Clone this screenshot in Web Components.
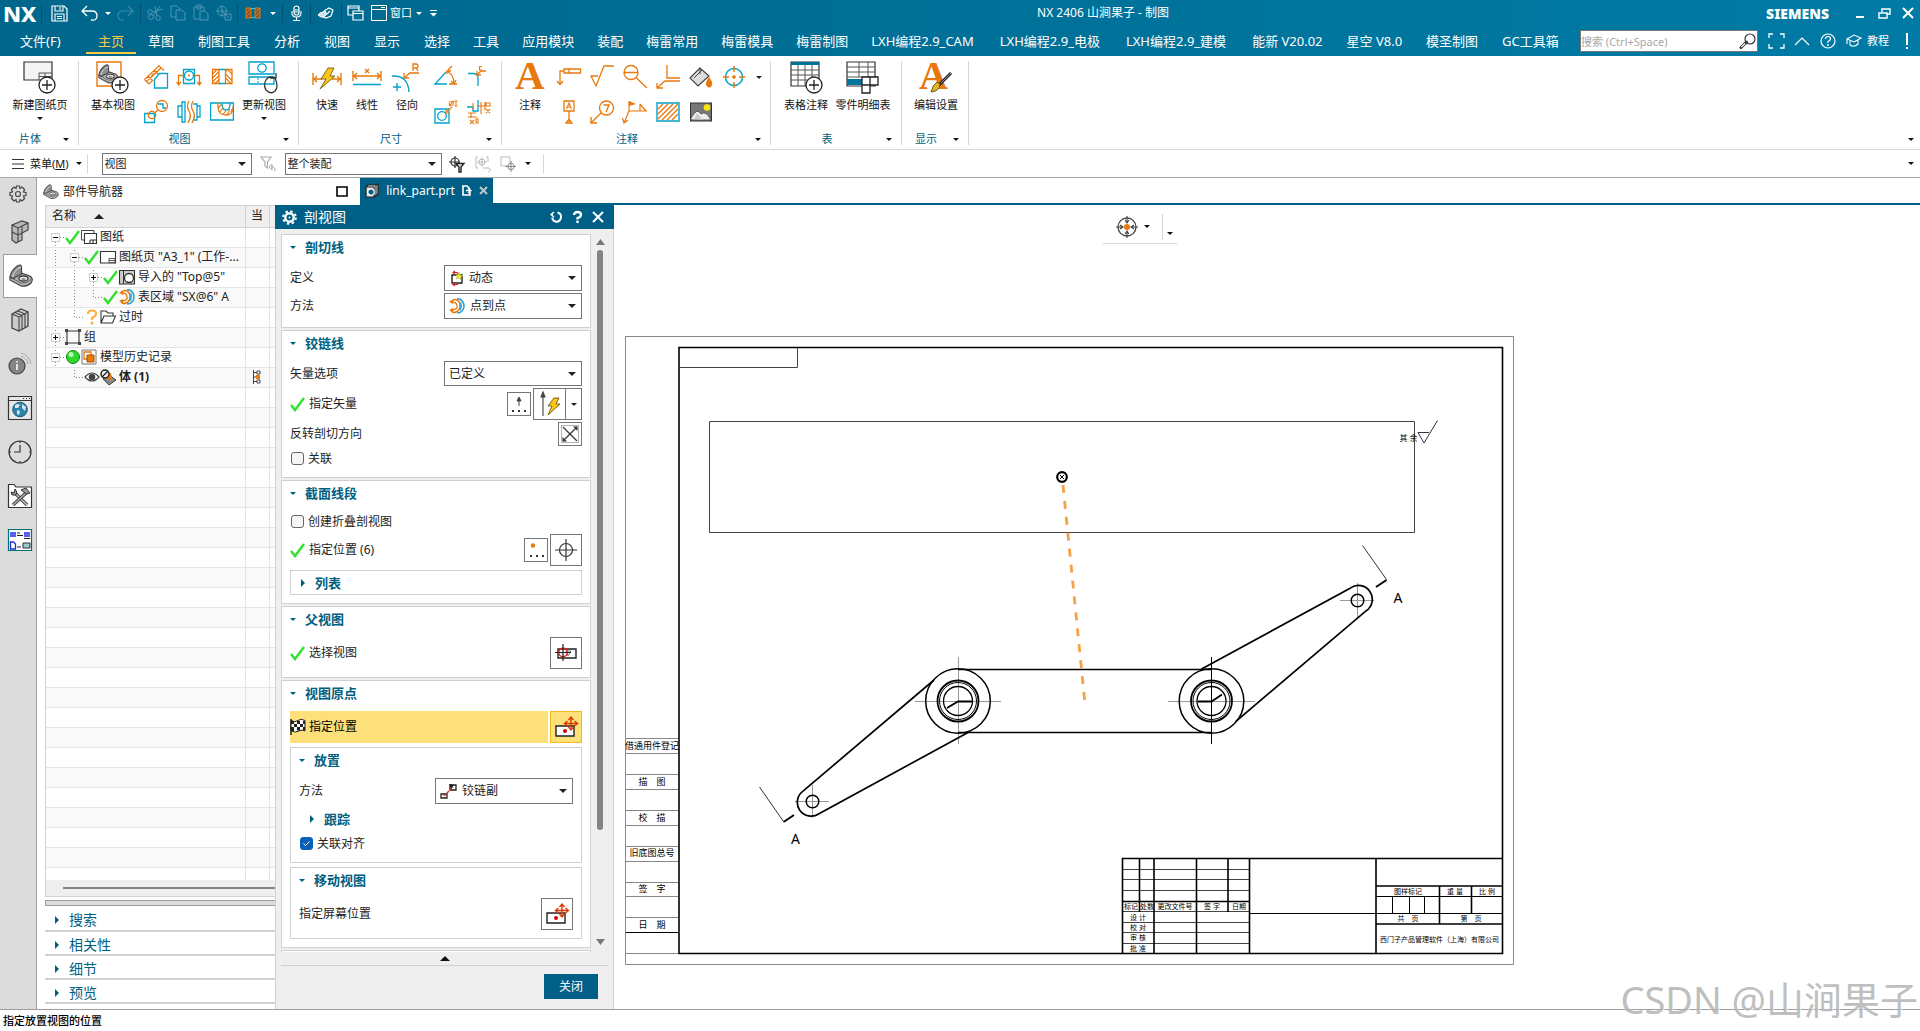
<!DOCTYPE html>
<html lang="zh-CN">
<head>
<meta charset="utf-8">
<title>NX 2406 山涧果子 - 制图</title>
<style>
html,body{margin:0;height:100%}
body{font:12px/16px "Noto Sans","Noto Sans CJK SC",sans-serif;color:#222;background:#fff;overflow:hidden}
</style>
</head>
<body>
<nx-app></nx-app>
<script>
const O='#e9780c', C='#00a3c9', K='#3c3c3c';
const s=(c,w=1.4)=>`fill="none" stroke="${c}" stroke-width="${w}"`;
const check='<path d="M1 9L5 14L14 2" fill="none" stroke="#2fe02f" stroke-width="2.4"/>';
const part=`<path d="M1 13L12 9L21 12Q25 15 22 19Q18 23 12 22L1 16Z" fill="#b2b2b2" stroke="#444" stroke-width="1.200"/><path d="M1 13L12 19Q18 20 23 15" fill="none" stroke="#666"/><path d="M1 13Q2 6 9 1.500Q12 0 12.500 3V10L4 14.500Z" fill="#8f8f8f" stroke="#444" stroke-width="1.200"/><path d="M3.500 13Q5 6 12 3" fill="none" stroke="#ddd"/><ellipse cx="14.500" cy="14.500" rx="4.500" ry="2.500" fill="#f2f2f2" stroke="#444" stroke-width="1.300"/><ellipse cx="14.500" cy="15" rx="2.200" ry="1.100" fill="#888"/>`;
const plusBadge=(x,y,r=8)=>`<circle cx="${x}" cy="${y}" r="${r}" fill="#fff" stroke="#222" stroke-width="1.3"/><path d="M${x-5} ${y}H${x+5}M${x} ${y-5}V${y+5}" stroke="#222" stroke-width="1.3"/>`;
const moveBox='<path d="M1 11H19V21H1Z" fill="#fff" stroke="#222" stroke-width="1.4"/><circle cx="10" cy="16" r="2" fill="#d00000"/><path d="M16 2.500V14.500M10 8.500H22" stroke="#d93a00" stroke-width="1.4"/><path d="M13.500 5L16 2L18.500 5M13.500 12L16 15L18.500 12M12.500 6L9.500 8.500L12.500 11M19.500 6L22.500 8.500L19.500 11" fill="none" stroke="#d93a00" stroke-width="1.4"/>';
const spring=`<path d="M3 3Q5 .5 8 2T11 8T7 14T2 12" ${s(O,1.500)}/><path d="M3 5Q7 3 8 7.500T3 11.500" ${s(O,1.300)}/><path d="M0 3.500L4.500 1.500L4 6ZM0 12L4 10L4.500 14Z" fill="${O}"/><path d="M8 .8L11 1Q15 4 15 8T11 14.500L8 15M11.500 4.500Q13 8 11 12" ${s('#2ba5d8',1.600)}/>`;
const ICONS={
caret:[8,4,'<path d="M0 0H8L4 4Z" fill="currentColor"/>'],
caretS:[6,3,'<path d="M0 0H6L3 3Z" fill="currentColor"/>'],
caretBar:[7,7,'<path d="M0 0H7V1H0ZM0 3H7L3.500 6.500Z" fill="currentColor"/>'],
up:[10,5,'<path d="M0 5H10L5 0Z" fill="currentColor"/>'],
upS:[9,7,'<path d="M0 7H9L4.500 1Z" fill="currentColor"/>'],
down:[9,7,'<path d="M0 0H9L4.500 6Z" fill="currentColor"/>'],
right:[6,8,'<path d="M1 0V8L5 4Z" fill="currentColor"/>'],
save:[17,17,`<path d="M1 1H13L16 4V16H1Z" ${s('#fff',1.2)}/><path d="M4 1V6H12V1M9 2V5M4 16V9H13V16M6 11.500H11M6 13.500H11" ${s('#fff',1.1)}/>`],
undo:[17,16,`<path d="M6 1L1 6L6 11M1 6H11Q16 6 16 11T10 15" ${s('#fff',1.3)}/>`],
redo:[17,16,`<path d="M11 1L16 6L11 11M16 6H6Q1 6 1 11T7 15" ${s('#3f89a8',1.2)}/>`],
cut:[16,16,`<circle cx="4" cy="12" r="2.500" ${s('#4f94b0',1)}/><circle cx="11" cy="13" r="2.300" ${s('#4f94b0',1)}/><circle cx="3" cy="7" r="2.200" ${s('#4f94b0',1)}/><path d="M5 7L16 4M6 11L13 1M10 11L8 1" ${s('#4f94b0',1)}/>`],
copy:[16,16,`<path d="M1 1H7L10 4V12H1Z" ${s('#4f94b0',1)}/><path d="M6 5H12L15 8V15H6Z" fill="#006b93" stroke="#4f94b0"/>`],
paste:[16,16,`<path d="M1 2H11V14H1ZM4 0H8V4H4Z" ${s('#4f94b0',1)}/><path d="M7 6H12L15 9V15H7Z" fill="#006b93" stroke="#4f94b0"/>`],
target0:[16,16,`<circle cx="6" cy="6" r="4.500" ${s('#4f94b0',1)}/><path d="M6 0V12M0 6H12M9 9H15V15H9ZM7 7L13 13" ${s('#4f94b0',1)}/>`],
halfT:[14,10,`<path d="M0 0H5V10H0ZM9 0H14V10H9Z" fill="#7a5b3a" stroke="${O}"/><path d="M0 5L5 0M0 9L5 4M9 5L14 0M9 9L14 4" stroke="${O}"/><path d="M5 .5H9M5 9.500H9" stroke="#2bd0ff"/>`],
mic:[11,16,`<rect x="3" y="1" width="5" height="9" rx="2.500" ${s('#fff',1.2)}/><path d="M1 6V8Q1 12 5.500 12T10 8V6M5.500 12V15M2 15.500H9M3 5H8M3 7H8" ${s('#fff',1.1)}/>`],
hand:[16,13,`<path d="M0 8Q2 5 5 5L7 4L9 7L6 10Q3 11 0 8Z" fill="#cfe3ea" stroke="#fff"/><path d="M6 4L11 1L15 3L13 9L8 11L5 10M9 7L12 4" ${s('#fff',1.2)}/>`],
wins:[17,16,`<path d="M1 1H12V10H1ZM1 3H12" ${s('#fff',1.2)}/><path d="M6 6H16V15H6ZM6 8.500H16" fill="#006d96" stroke="#fff" stroke-width="1.2"/>`],
win:[16,16,`<path d="M.5 .5H15.500V15.500H.5ZM.5 4.500H15.500M10 2.500H14" ${s('#fff',1)}/>`],
min:[9,12,'<path d="M0 9H8V11H0Z" fill="#fff"/>'],
restore:[13,11,`<path d="M4 4V1H12V6H9M1 5H9V10H1Z" ${s('#fff',1.4)}/>`],
close:[12,12,`<path d="M1 1L11 11M11 1L1 11" ${s('currentColor',2)}/>`],
full:[17,16,`<path d="M1 5V1H5M12 1H16V5M16 11V15H12M5 15H1V11" ${s('#fff',1.3)}/>`],
chev:[16,9,`<path d="M1 8L8 1L15 8" ${s('#fff',1.2)}/>`],
help:[16,16,`<circle cx="8" cy="8" r="7" ${s('#fff',1.2)}/><path d="M5.500 6Q5.500 3.500 8 3.500T10.500 6Q10.500 7 8 8.500V10" ${s('#fff',1.2)}/><circle cx="8" cy="12" r=".9" fill="#fff"/>`],
cap:[16,14,`<path d="M1 5L8 1L15 4L8 8ZM4 7V11Q8 14 12 10V6M1 5V10" ${s('#fff',1.1)}/>`],
bang:[4,17,'<path d="M1 0H3V12H1ZM1 14H3V16H1Z" fill="#fff"/>'],
find:[17,17,`<circle cx="11" cy="6" r="5" ${s('#333',1.2)}/><path d="M7.500 9L2 14.500" stroke="#333" stroke-width="3" stroke-linecap="round"/><path d="M6 10.500L2.300 14.200" stroke="#fff" stroke-width="1.200"/>`],
sheet:[34,32,`<path d="M1 1H29V19H1Z" fill="#f4f4f4" stroke="#333" stroke-width="1.2"/><path d="M16 12H29M16 15.500H29M16 12V19M22 12V19" stroke="#555"/>${plusBadge(24,24)}`],
base:[34,32,`<path d="M1 1H25V25H1Z" ${s(O,1.4)}/><g transform="translate(2 3) scale(.85)">${part}</g>${plusBadge(24,24)}`],
proj:[24,24,`<path d="M.5 14.500L15 .8L20 5.500M5 19L.5 14.500M5 19L9 15M4 11L9 16M7.500 11L10 8.500M10 5L15 10M12 8L14.500 5.500M3 16L17 3" ${s(O,1.200)}/><path d="M10.500 23V14.500L15.500 8.500H23.500V23Z" fill="#fff" stroke="${C}" stroke-width="1.3"/>`],
sect:[24,24,`<path d="M6.500 4.500H17.500V18.500H6.500Z" ${s(C,1.3)}/><circle cx="12" cy="10.500" r="4.500" ${s(C,1.3)}/><path d="M7 10.500H1.500V20M17 10.500H22.500V20M-.500 17L1.500 20L4 17M20 17L22.500 20L24.500 17M11 10.500H13" ${s(O,1.3)}/>`],
half:[24,24,`<path d="M2.500 4.500H9V18.500H2.500ZM15.500 4.500H22V18.500H15.500Z" ${s(O,1.3)}/><path d="M2.500 9L7 4.500M2.500 13L9 6.500M2.500 17L9 10.500M5 18.500L9 14.500M15.500 6.500L17.500 4.500L22 9M15.500 9L22 15.500M15.500 13L21 18.500" ${s(O,1.1)}/><path d="M9 4.500H15.500M9 18.500H15.500" ${s(C,1.300)}/>`],
detail:[24,24,`<path d="M.7 13.500H10.500V22.500H.7Z" ${s(C,1.3)}/><circle cx="8" cy="15" r="3.700" ${s(O,1.3)}/><circle cx="18" cy="6" r="5.500" ${s(O,1.3)}/><path d="M11 12.500L14 10" ${s(O,1.3)}/><path d="M14 4H19V8H22" ${s(C,1.3)}/>`],
brk:[24,24,`<path d="M5 6H1V17H5M5 2H8V22H5ZM16 4H20V20H16M20 6H23V17H20" ${s(C,1.3)}/><path d="M12 1Q9 6 12 11T11 23M16 1Q13 6 16 11T15 23" ${s(O,1.300)}/>`],
brkout:[24,24,`<path d="M.6 3H23.400V20H.6Z" ${s(C,1.300)}/><path d="M8 3Q7 15 16 15Q22 15 23 9" ${s(O,1.3)}/><path d="M12 3Q12 10 16 10T20 3" ${s(C,1.300)}/><path d="M8 8L12 4M10 12L13 8M13 14.500L16 10.500M17 15L20 9M21 12L23 7" ${s(O,1.1)}/>`],
update:[32,32,`<path d="M1 1H26V13H1Z" fill="#fff" stroke="${C}" stroke-width="1.300"/><circle cx="14" cy="7" r="4.200" ${s(C,1.3)}/><path d="M1 16H26V23H1Z" ${s(C,1.300)}/><path d="M10 17V23" stroke="${C}" stroke-dasharray="2 1"/><path d="M27 17Q31 26 27 30T18 29Q15 24 18 19T27 17M22 17H28V12" ${s('#333',1.300)}/>`],
rapid:[30,32,`<path d="M1 12V24M29 12V24M2 18H10M20 18H28M5 15L2 18L5 21M25 15L28 18L25 21" ${s(O,1.400)}/><g transform="translate(6 7)"><path d="M10 0L3 11H8L2 21L17 8H12L16 0Z" fill="#ffc61a" stroke="#6b5a18" stroke-width=".9"/></g>`],
linear:[30,32,`<path d="M1 10V20M29 10V20M2 15H28M5 12L2 15L5 18M25 12L28 15L25 18" ${s(O,1.4)}/><path d="M13 8L17 12M17 8L13 12" ${s(O)}/><path d="M1 23.500H29" ${s(C,1.500)}/>`],
radial:[32,32,`<path d="M1 15Q17 14 18 31M2 26H10M6 22V30" ${s(C,1.400)}/><path d="M13 17L19 12H28M13 12V17H18" ${s(O,1.3)}/><path d="M22 10V3H25Q27 3 27 5T25 7H22M25 7L27 10" ${s(O,1.300)}/>`],
ang:[24,24,`<path d="M12 7L1 19H13" ${s(C,1.3)}/><path d="M14 5L18 1M13 6Q20 10 20 19M15 19H23M13 9V6L17 6M17 16L20 19L22 15" ${s(O,1.300)}/>`],
chamf:[24,24,`<path d="M1 8.500H6Q11 8.500 11 13V21M1 8.500H3" ${s(C,1.3)}/><path d="M11 9L14 6H19M10 6V10H14" ${s(O,1.3)}/><path d="M15 1.500H12.500V5H15" ${s(O,1.1)}/>`],
hole:[24,24,`<path d="M1 9H15V23H1Z" ${s(C,1.3)}/><circle cx="8" cy="16" r="4.300" ${s(C,1.3)}/><path d="M11 13L18 7M12 9.500V13H16M15 6L20 1M22 1V6M20.500 1H23.500M20.500 6H23.500" ${s(O,1.1)}/><circle cx="17.300" cy="3.500" r="2.200" ${s(O,1)}/>`],
ord:[24,24,`<path d="M0 7H6V11H11V0" ${s(C,1.3)}/><path d="M6 3V9M10 6H18M14 2V14M18 2V10M1 13H9M4 13V18M1 17H10M3 20L7 24M7 20L3 24M9 19H11V23H9ZM19 3H23V6H19ZM19 9L23 13M23 9L19 13" ${s(O,1.1)}/>`],
noteA:[32,32,`<text x="1" y="28" font-size="41" font-weight="700" fill="${O}" font-family="Liberation Serif">A</text>`],
lead:[24,24,`<path d="M7 4H23.500V8H7ZM12 4V8" ${s(O,1.3)}/><path d="M7 6H3V19M0 16L3 19.500L6 16" ${s(O,1.300)}/>`],
rough:[24,24,`<path d="M.500 11H8M1 11L6 21L14 1H24" ${s(O,1.300)}/>`],
mag:[24,24,`<circle cx="8" cy="7.500" r="7" ${s(O,1.3)}/><path d="M1 7.500H15M13 12.500L24 23" ${s(O,1.300)}/>`],
wcs:[24,24,`<path d="M11 0V13H24M24 16H9L1 23M1 18V23H7" ${s(O,1.3)}/>`],
bucket:[24,24,`<path d="M11 3L1 13L9 21L20 11Z" fill="#ddd" stroke="#444" stroke-width="1.2"/><path d="M11 3V9M5 13L13 5" stroke="#444"/><path d="M20 12Q24 17 23 20T20 22.500T17 20T20 12Z" fill="${O}"/>`],
cross:[24,24,`<circle cx="12" cy="12" r="8.500" ${s(C,1.5)}/><path d="M12 1V7M12 17V23M1 12H7M17 12H23M10 12H14M12 10V14" ${s(O,1.500)}/>`],
datum:[24,24,`<path d="M7 1H17V11H7ZM12 11V22M9 23L12 19L15 23Z" ${s(O,1.3)}/><path d="M9.500 9L12 3L14.500 9M10 7H14" ${s(O,1.100)}/>`],
balloon:[24,24,`<circle cx="16.500" cy="8" r="7" ${s(O,1.3)}/><path d="M13.500 5H19L16 12M11 13L1 23M1 17V23H7" ${s(O,1.400)}/>`],
flag:[24,24,`<path d="M6 1V12M6 11L1 23M-.500 18L1 23L5 20M6 11H24M17 4V11M17 4L23 11" ${s(O,1.2)}/><path d="M6 1L13 4L6 6Z" fill="${O}"/>`],
hatch:[24,24,`<path d="M1 3H23V21H1Z" ${s(C,1.400)}/><path d="M2 9L7 4M2 14L12 4M2 19L17 4M6 20L22 4M11 20L22 9M16 20L22 14" ${s(O,1.4)}/>`],
image:[24,24,`<rect x="1.500" y="3" width="21" height="18" fill="#777" stroke="#333"/><circle cx="18" cy="7.500" r="3.300" fill="#ffe600"/><path d="M2 18Q8 7 12 14Q17 10 22 20H2Z" fill="#eee" stroke="#555"/><path d="M5 19L8 13L14 20" fill="#ccc"/>`],
tnote:[34,32,`<path d="M2 1H30V25H2Z" fill="#fff" stroke="#333" stroke-width="1.2"/><path d="M2 1H30V4H2Z" fill="#00759b"/><path d="M2 9H30M2 14H30M2 19H30M9 4V25M16 4V25M23 4V25" stroke="#555"/>${plusBadge(25,24)}`],
tlist:[34,32,`<path d="M1 1H29V25H1Z" fill="#fff" stroke="#333" stroke-width="1.2"/><path d="M1 18H17V24H1Z" fill="#00759b"/><path d="M1 6H29M1 11H29M1 16H29M13 1V16M22 1V16" stroke="#555"/><path d="M16 16H24V24H16ZM24 16H32V24H24ZM16 24H24V32H16Z" fill="#fff" stroke="#222" stroke-width="1.3"/>`],
editset:[34,32,`<text x="0" y="28" font-size="40" font-weight="700" fill="${O}" font-family="Liberation Serif">A</text><path d="M32 12L20 24" stroke="#222" stroke-width="3"/><path d="M32 12L22 22" stroke="#999" stroke-width="1"/><path d="M21 23Q21 30 12 31Q14 23 18 21Z" fill="#e0b42e" stroke="#6a5a20"/>`],
menu:[12,10,'<path d="M0 .5H12M0 5H12M0 9.500H12" stroke="#333" stroke-width="1.1"/>'],
filt:[16,16,'<path d="M1 1H11L7.500 6V12L5 10V6Z" fill="none" stroke="#aaa" stroke-width="1.2"/><path d="M9 11L12 8V14ZM11 11Q15 10 15 15" fill="none" stroke="#aaa"/>'],
selF:[16,16,'<circle cx="6" cy="6" r="4" fill="none" stroke="#333" stroke-width="1.2"/><path d="M6 0V12M0 6H11" stroke="#333" stroke-width="1.2"/><path d="M7 7.500H15L12 11V16H10V11Z" fill="#eee" stroke="#222" stroke-width="1.400"/>'],
sel2:[17,16,'<path d="M3 1H1V12H3M11 1H13V6" fill="none" stroke="#bbb"/><circle cx="7" cy="6" r="3" fill="none" stroke="#bbb"/><path d="M7 1V11M2 6H12M8 12H14Q17 14 13 16" stroke="#bbb" fill="none"/>'],
sel3:[16,16,'<path d="M1 1H10V10H1Z" fill="none" stroke="#bbb"/><circle cx="11" cy="10.500" r="3.200" fill="#fff" stroke="#888"/><path d="M11 5V16M5.500 10.500H16" stroke="#888"/>'],
gear:[18,18,`<circle cx="9" cy="9" r="2.500" ${s('currentColor',1.200)}/><path d="M7.500 1H10.500L11 3.500L13 2L15.500 4.500L14.500 7L17 7.500V10.500L14.500 11L15.500 13.500L13 16L11 14.500L10.500 17H7.500L7 14.500L5 16L2.500 13.500L3.500 11L1 10.500V7.500L3.500 7L2.500 4.500L5 2L7 3.500Z" ${s('currentColor',1.200)}/>`],
gearW:[15,15,`<circle cx="7.500" cy="7.500" r="4.200" ${s('#fff',2.400)}/><circle cx="7.500" cy="7.500" r="6.300" fill="none" stroke="#fff" stroke-width="2" stroke-dasharray="2.450 2.500"/><circle cx="7.500" cy="7.500" r="1" fill="#fff"/>`],
blocks:[20,24,'<path d="M2 5L12 1L18 3V10L12 13V20L6 23L2 20Z" fill="#b8b8b8" stroke="#444" stroke-width="1.200"/><path d="M2 5L8 8L18 3M8 8V22M12 6V13M2 12L8 15L12 13" fill="none" stroke="#444" stroke-width="1.100"/>'],
part:[24,24,part],
part16:[16,16,`<g transform="scale(.66)">${part}</g>`],
books:[20,24,'<path d="M2 6L11 1L18 4V18L9 23L2 20Z" fill="#ccc" stroke="#444" stroke-width="1.300"/><path d="M2 6L9 9L18 4M9 9V23M5 4.500L12 7.500V21M8 3L15 6V19.500" fill="none" stroke="#444" stroke-width="1.1"/>'],
info:[24,24,'<path d="M13 4Q19 6 20 12M13 1Q21 3 23 12" fill="none" stroke="#aaa"/><circle cx="9" cy="14" r="8" fill="#858585" stroke="#444" stroke-width="1.200"/><path d="M9 12V18M9 9V10.500" stroke="#fff" stroke-width="1.500"/>'],
web:[24,24,'<path d="M.500 .500H23.500V23.500H.500Z" fill="#e8e8e8" stroke="#333" stroke-width="1.200"/><path d="M.500 4.500H23.500" stroke="#333"/><path d="M15 2.500H22" stroke="#333" stroke-dasharray="1 2"/><circle cx="12" cy="13.500" r="7.300" fill="#2b83a8" stroke="#225a75"/><path d="M7 9Q10 7 12 9L10 12L7 12ZM14 8L18 11L17 15L14 12ZM9 14L12 15L11 19L9 18Z" fill="#d7e6ec"/>'],
clock:[24,24,'<circle cx="12" cy="12" r="11" fill="none" stroke="#333" stroke-width="1.200"/><path d="M12 5V12H6M12 1V3M12 21V23M1 12H3M21 12H23" fill="none" stroke="#333" stroke-width="1.200"/>'],
tools:[24,24,'<path d="M.500 3V.500H6L8 3H23.500V23.500H.500Z" fill="#fff" stroke="#333" stroke-width="1.200"/><path d="M6 8L19 21" stroke="#444" stroke-width="3.200"/><path d="M6 8L19 21" stroke="#ccc" stroke-width="1.200"/><path d="M18 9L5 21" stroke="#444" stroke-width="3.500"/><path d="M18 9L5 21" stroke="#aaa" stroke-width="1.500"/><path d="M3 8L6 9L7 5Q10 8 8 11L4 11ZM13 6L18 4L22 9L19 10L17 9Z" fill="#999" stroke="#333"/>'],
flow:[24,22,'<path d="M.500 .500H23.500V21.500H.500Z" fill="#fff" stroke="#007070" stroke-width="1.200"/><path d="M2 3H8V8H2ZM16 3H22V8H16Z" fill="#5560f0"/><path d="M9 4H12M9 6.500H15M16 9.500H22M9 18H13" stroke="#222"/><path d="M2.500 13H5.500L7.500 15V20H2.500Z" fill="#fff" stroke="#2030d0" stroke-width="1.300"/><path d="M15 14H22V19H15Z" fill="#9cc" stroke="#333"/>'],
box:[12,11,'<path d="M1 1H11V10H1Z" fill="none" stroke="#000" stroke-width="1.600"/>'],
ok:[16,16,check],
sheets:[16,16,'<path d="M.500 1.500H13V11H.500Z" fill="#fff" stroke="#444"/><path d="M3.500 4.500H15.500V14.500H3.500ZM9 11H15M9 11V14M12 11V14" fill="#fff" stroke="#333" stroke-width="1.100"/>'],
sheet1:[16,16,'<path d="M.500 2.500H15.500V14H.500Z" fill="#fff" stroke="#333" stroke-width="1.100"/><path d="M9 9.500H15V13.500H9ZM9 11.500H15" fill="none" stroke="#555"/>'],
viewi:[16,16,'<path d="M.500 1.500H15.500V15H.500Z" fill="#ccc" stroke="#333" stroke-width="1.100"/><path d="M4.500 2V15" stroke="#333"/><circle cx="10" cy="9" r="4.500" fill="#fff" stroke="#333" stroke-width="1.300"/>'],
spring:[16,16,spring],
quest:[16,16,`<path d="M4 5Q4 1.500 8 1.500T12 5Q12 7 8 9V11" ${s('#ffad42',2.2)}/><circle cx="8" cy="14" r="1.500" fill="#ffad42"/>`],
folder:[16,14,'<path d="M1 13V1H6L8 3H13V6M1 13L4 6H15.500L12.500 13Z" fill="none" stroke="#333" stroke-width="1.100"/>'],
group:[16,16,'<path d="M2 2H14V14H2Z" fill="none" stroke="#333" stroke-width="1.100"/><path d="M0 0H3V3H0ZM13 0H16V3H13ZM0 13H3V16H0ZM13 13H16V16H13Z" fill="#444"/>'],
ball:[16,16,'<circle cx="8" cy="8" r="6.500" fill="#2fd82f" stroke="#178017"/><circle cx="6" cy="5.500" r="2.500" fill="#b6ffb6"/>'],
hist:[16,16,`<path d="M1 1H15V15H1Z" fill="none" stroke="#777"/><path d="M3 3H10V10H3Z" fill="#fff" stroke="${O}" stroke-width="1.300"/><path d="M6 6H13V13H6Z" fill="${O}" stroke="#a85000"/>`],
eye:[16,12,'<path d="M1 6Q8 -2 15 6Q8 14 1 6Z" fill="#fff" stroke="#444" stroke-width="1.200"/><circle cx="8" cy="6" r="3.300" fill="#444"/>'],
body:[16,16,`<path d="M3 10L9 6L16 11L9 16Z" fill="#888" stroke="#444"/><path d="M6 6L11 4L12 10L7 11Z" fill="${O}"/><circle cx="5" cy="5" r="4" fill="#eee" stroke="#222" stroke-width="1.500"/><path d="M2 8L8 2" stroke="#222" stroke-width="1.300"/>`],
colI:[8,14,`<path d="M.500 0V14M1 2.500H4M1 7H3M1 11.500H4" stroke="#444"/><path d="M4 1H7V4H4ZM4 10H7V13H4Z" fill="#fff" stroke="#444"/><path d="M3 5H7V9H3Z" fill="${O}"/>`],
prt:[14,15,'<path d="M1 4H9V14H1ZM1 4L3 2H11L13 1V11L9 14" fill="#ddd" stroke="#222" stroke-width="1.200"/><circle cx="6" cy="9" r="3.200" fill="#00608a" stroke="#fff" stroke-width="1.200"/><path d="M11 1V13" stroke="#222"/>'],
tabE:[10,11,'<path d="M8 7V10H1V1H5L8 4" fill="none" stroke="#fff" stroke-width="1.600"/><path d="M4 5.500H8M6 3.500L9 5.500L6 8" fill="none" stroke="#fff" stroke-width="1.300"/>'],
tabX:[9,9,'<path d="M1 1L8 8M8 1L1 8" stroke="#c0c8cc" stroke-width="2"/>'],
reset:[13,12,'<path d="M4 1L1 3.500L4 6M1 3.500H3" fill="none" stroke="#fff" stroke-width="1.400"/><path d="M7.500 1.500Q11.500 2.500 11 6.500Q10 11 6 10.700Q2.500 10 2.300 6.500" fill="none" stroke="#fff" stroke-width="2"/>'],
q:[9,12,'<path d="M1 4Q1 1 4.500 1T8 4Q8 6 4.500 7V8.500" fill="none" stroke="#fff" stroke-width="2.300"/><circle cx="4.500" cy="10.800" r="1.400" fill="#fff"/>'],
dyn:[13,15,'<path d="M1 4H11V12H1Z" fill="#fff" stroke="#222" stroke-width="1.400"/><path d="M6.500 1.500H2M4 0L2 1.500L4 3M6.500 1.500V3M6.500 13.500H2M4 12L2 13.500L4 15M6.500 12V14" fill="none" stroke="#d22" stroke-width="1.200"/><path d="M8 1L9 4L12 4.500L9.500 6L10 9L8 7L5 8L6 5.500L5 3L7 4Z" fill="#ecec20" stroke="#a0a040" stroke-width=".4"/>'],
vec:[16,17,'<path d="M8 2V10M6 5L8 1L10 5Z" fill="#444" stroke="#444"/><path d="M1 14H3V16H1ZM7 14H9V16H7ZM13 14H15V16H13Z" fill="#333"/>'],
vecB:[22,26,`<path d="M4 4V25M2 6L4 1L6 6Z" fill="#444" stroke="#444" stroke-width="1.100"/><g transform="translate(6 6)"><path d="M9 1L3 9H7L3 18L15 7H11L14 1Z" fill="#ffc61a" stroke="#6b5a18" stroke-width=".9"/></g>`],
rev:[20,20,'<path d="M1.500 1.500H18.500V18.500H1.500Z" fill="none" stroke="#666" stroke-dasharray="1 1"/><path d="M3 3L17 17M17 3L3 17" stroke="#333" stroke-width="1.200"/><path d="M13 2.500H17.500V7ZM2.500 13V17.500H7Z" fill="#333"/>'],
pts:[16,17,`<circle cx="5" cy="3.500" r="2.200" fill="${O}"/><path d="M2 13H4V15H2ZM8 13H10V15H8ZM14 13H16V15H14Z" fill="#333"/>`],
aim:[22,22,'<circle cx="11" cy="11" r="6.500" fill="none" stroke="#333" stroke-width="1.200"/><path d="M11 0V22M0 11H22" stroke="#333" stroke-width="1.200"/>'],
selv:[22,18,'<path d="M3 5H21V14H3Z" fill="none" stroke="#222" stroke-width="1.400"/><path d="M11 7L16 7L13 12Z" fill="none" stroke="#777"/><circle cx="8" cy="8.500" r="4.200" fill="none" stroke="#e02020" stroke-width="1.400"/><path d="M8 0V17M0 8.500H16" stroke="#222" stroke-width="1.200"/>'],
fin:[16,16,'<path d="M1 0V16" stroke="#222" stroke-width="1.500"/><path d="M1 1.500Q5 4 8 1.500T15 1.500V12Q12 10 9 12T1 12Z" fill="#fff" stroke="#222"/><path d="M1 2H4V5H1ZM7 2H10V5H7ZM4 5H7V8H4ZM10 5H13V8H10ZM1 8H4V12H1ZM7 8H10V11.500H7ZM13 2H15V5H13ZM13 8H15V11H13Z" fill="#222"/>'],
move:[23,24,moveBox],
hinge:[17,15,'<path d="M1 10H7V14H1ZM10 1H16V6H10Z" fill="none" stroke="#222" stroke-width="1.300"/><path d="M4 12L13 3" stroke="#d22" stroke-width="1.400" stroke-dasharray="3 1"/><path d="M9 0L14 1L11 5Z" fill="#222"/>'],
orient:[24,24,`<circle cx="12" cy="12" r="9" fill="none" stroke="#444" stroke-width="1.300"/><path d="M12 1V8M12 16V23M1 12H8M16 12H23M10 5L12 8L14 5M10 19L12 16L14 19M5 10L8 12L5 14M19 10L16 12L19 14" fill="none" stroke="#444" stroke-width="1.100"/><circle cx="12" cy="12" r="3" fill="${O}"/>`]
};
const BASE=`<style>
:host{display:block;box-sizing:border-box}
*{box-sizing:border-box}
button,input,select{font:inherit;color:inherit;margin:0;padding:0;border:0;background:none;appearance:none;outline:0}
button{display:flex;align-items:center;justify-content:center;flex:none;white-space:nowrap}
.row{display:flex;align-items:center}
</style>`;
function define(name,render){
  customElements.define(name,class extends HTMLElement{
    constructor(){super();this.attachShadow({mode:'open'});}
    connectedCallback(){this.shadowRoot.innerHTML=BASE+render(this);}
  });
}
const at=(e,n)=>e.getAttribute(n)||'';
const ic=n=>`<nx-icon name="${n}"></nx-icon>`;

define('nx-icon',e=>{const [w,h,g]=ICONS[at(e,'name')];
  return `<style>:host{flex:none;width:${w}px;height:${h}px}svg{display:block;overflow:visible}</style><svg width="${w}" height="${h}" viewBox="0 0 ${w} ${h}" aria-hidden="true">${g}</svg>`;});

define('nx-tool',e=>`<style>:host{flex:none;width:var(--w,24px)}button{width:100%;height:var(--h,24px)}</style>
<button aria-label="${at(e,'label')||at(e,'icon')}">${ic(at(e,'icon'))}</button>`);

const t=(i,w,l)=>`<nx-tool icon="${i}" style="--w:${w}px" label="${l||i}"></nx-tool>`;
define('nx-titlebar',()=>`<style>
:host{display:flex;align-items:center;height:26px;color:#fff}
.logo{width:39px;padding-left:3px;font-size:22px;font-weight:800;line-height:26px}
hr{width:1px;height:20px;margin:0 2px;border:0;background:#00516f}
.win{font-size:11px}
.title{flex:1;text-align:center;font-size:12px}
.brand{font-size:14px;font-weight:900;margin:2px 19px 0 0}
</style>
<div class="logo">NX</div><hr>${t('save',30,'保存')}${t('undo',30,'撤销')}${t('caretS',8)}${t('redo',26,'重做')}<hr>
${t('cut',23,'剪切')}${t('copy',23,'复制')}${t('paste',23,'粘贴')}${t('target0',23)}<hr>${t('halfT',26)}${t('caretS',14)}<hr>${t('mic',23)}<hr>${t('hand',26)}<hr>${t('wins',23)}${t('win',23)}<button class="win">窗口</button>${t('caretS',14)}${t('caretBar',14)}
<div class="title">NX 2406 山涧果子 - 制图</div><div class="brand">SIEMENS</div>${t('min',24,'最小化')}${t('restore',24,'还原')}${t('close',24,'关闭')}`);

const TABS=['主页','草图','制图工具','分析','视图','显示','选择','工具','应用模块','装配','梅雷常用','梅雷模具','梅雷制图','LXH编程2.9_CAM','LXH编程2.9_电极','LXH编程2.9_建模','能新 V20.02','星空 V8.0','模圣制图','GC工具箱'];
define('nx-menubar',()=>`<style>
:host{display:flex;align-items:center;height:30px;color:#fff;font-size:13px}
.tab{height:30px;padding:0 12px;position:relative}
.tight{padding:0 11px 0 12px}
.wide{padding:0 14px 0 12px}
.file{width:86px;justify-content:flex-start;padding:0 0 0 20px}
.on{color:#ffc845}
.on::after{content:"";position:absolute;left:0;right:0;bottom:2px;height:2px;background:#ffc845}
.sp{flex:1}
.search{display:flex;align-items:center;width:178px;height:22px;background:#fff;border:1px solid #777;font-size:11px;margin-right:5px;padding-right:1px}
.search input{flex:1;min-width:0;height:20px;color:#222}
.search input::placeholder{color:#a8a8a8;opacity:1}
.learn{font-size:11px;margin-right:5px}
</style>
<button class="tab file">文件(F)</button>${TABS.map((n,i)=>`<button class="tab${i?'':' on'}${i>5&&i<13?' tight':n.startsWith('LXH')?' wide':''}">${n}</button>`).join('')}
<div class="sp"></div><div class="search"><input type="text" aria-label="搜索" placeholder="搜索 (Ctrl+Space)">${ic('find')}</div>
${t('full',26)}${t('chev',26)}${t('help',26)}${t('cap',26)}<button class="learn">教程</button>${t('bang',26)}`);

define('nx-big',e=>`<style>:host{flex:none;width:var(--w,48px)}button{width:100%;flex-direction:column;font-size:11px;line-height:14px;gap:5px;color:#111}</style>
<button>${ic(at(e,'icon'))}<span>${at(e,'label')}</span>${e.hasAttribute('menu')?ic('caretS'):''}</button>`);
define('nx-small',e=>`<style>:host{display:grid;flex:none;grid-template-rows:32px 32px;grid-auto-flow:column;grid-auto-columns:33px;gap:3px 0;margin:0 2px}button{width:33px;height:32px}</style>
${at(e,'icons').split(' ').map(n=>`<button aria-label="${n}">${ic(n)}</button>`).join('')}`);
define('nx-group',e=>`<style>
:host{display:flex;flex-direction:column;justify-content:space-between;margin:5px 0 4px;border-right:1px solid #d6d6d6}
.c{display:flex;align-items:flex-start;padding:0 var(--pr,10px) 0 var(--pl,10px)}
.f{display:flex;align-items:center;height:12px;font-size:11px;line-height:12px;color:#00607f}
.f span{flex:1;text-align:center}
.f button{width:18px;padding-left:3px;height:12px;justify-content:flex-start;color:#111}
</style><div class="c"><slot></slot></div><div class="f"><span>${at(e,'label')}</span><button aria-label="${at(e,'label')}选项">${ic('caretS')}</button></div>`);
define('nx-ribbon',()=>`<style>
:host{display:flex;height:94px;border-bottom:1px solid #d6d6d6;background:#fff}
.end{margin:0 5px 8px auto;align-self:flex-end;--h:4px;color:#111}
.more{height:32px;width:14px}
</style>
<nx-group label="片体" style="--pl:12px"><nx-big icon="sheet" label="新建图纸页" menu style="--w:56px"></nx-big></nx-group>
<nx-group label="视图"><nx-big icon="base" label="基本视图"></nx-big><nx-small icons="proj detail sect brk half brkout"></nx-small><nx-big icon="update" label="更新视图" menu></nx-big></nx-group>
<nx-group label="尺寸" style="--pl:8px;--pr:4px"><nx-big icon="rapid" label="快速" style="--w:40px"></nx-big><nx-big icon="linear" label="线性" style="--w:40px"></nx-big><nx-big icon="radial" label="径向" style="--w:40px"></nx-big><nx-small icons="ang hole chamf ord"></nx-small></nx-group>
<nx-group label="注释" style="--pl:8px;--pr:4px"><nx-big icon="noteA" label="注释" style="--w:40px"></nx-big><nx-small icons="lead datum rough balloon mag flag wcs hatch bucket image cross"></nx-small><button class="more" aria-label="更多">${ic('caretS')}</button></nx-group>
<nx-group label="表" style="--pl:6px"><nx-big icon="tnote" label="表格注释" style="--w:58px"></nx-big><nx-big icon="tlist" label="零件明细表" style="--w:56px"></nx-big></nx-group>
<nx-group label="显示" style="--pr:8px"><nx-big icon="editset" label="编辑设置"></nx-big></nx-group>
<nx-tool class="end" icon="caretS" style="--w:8px" label="功能区选项"></nx-tool>`);

define('nx-select',e=>`<style>
:host{flex:none;width:var(--w,138px)}
.b{display:flex;align-items:center;height:var(--sh,26px);border:1px solid #767676;background:#fff;padding:0 5px 0 var(--p,6px);gap:5px;color:#222}
select{flex:1;min-width:0;height:100%}
</style><div class="b">${at(e,'icon')?ic(at(e,'icon')):''}<select aria-label="${at(e,'label')}"><option>${at(e,'value')}</option></select>${ic('caret')}</div>`);
define('nx-selbar',()=>`<style>
:host{display:flex;align-items:center;height:28px;border-bottom:1px solid #a6a6a6;font-size:11px;color:#111}
hr{width:1px;height:20px;border:0;background:#d6d6d6;margin:0}
.m{gap:6px;padding-left:12px;margin-right:2px}
nx-select{--sh:22px;--p:2px}
.end{margin-left:auto;margin-right:5px}
</style><button class="m">${ic('menu')}<span>菜单(<u>M</u>)</span></button>${t('caretS',16)}<hr>
<nx-select style="--w:150px;margin-left:14px" label="类型过滤器" value="视图"></nx-select>${t('filt',33)}<nx-select style="--w:157px" label="选择范围" value="整个装配"></nx-select>
${t('selF',30)}${t('sel2',23)}${t('sel3',26)}${t('caretS',14)}<hr style="margin-left:8px"><nx-tool class="end" icon="caretS" style="--w:8px"></nx-tool>`);

define('nx-rail',()=>`<style>
:host{flex:none;width:37px;background:#dcdcdc;border-right:1px solid #9e9e9e;color:#444}
button{width:36px;height:44px;padding-left:3px}
.first{height:32px;padding-left:0}
.on{width:34px;margin-left:3px;padding:0;border:1px solid #9e9e9e;border-right:0;background:#fff}
</style>${['gear','blocks','part','books','info','web','clock','tools','flow'].map((n,i)=>`<button class="${i==0?'first':i==2?'on':''}" aria-label="${n}">${ic(n)}</button>`).join('')}`);

const guide=k=>{const d='stroke="#888" stroke-dasharray="1 2"';
 const m={v:`<path d="M9.500 0V20" ${d}/>`,L:`<path d="M9.500 0V10.500H18" fill="none" ${d}/>`,' ':''};
 const b=(up,p)=>`${up?`<path d="M9.500 0V6" ${d}/>`:''}<path d="M9.500 15V20M14 10.500H19" ${d}/><path d="M5.500 6.500H13.500V14.500H5.500Z" fill="#fff" stroke="#ccc"/><path d="M7 10.500H12${p?'M9.500 8V13':''}" stroke="#111"/>`;
 const g=m[k]??(k=='-'?b(0,0):k=='='?b(1,0):b(1,1));
 return `<svg width="19" height="20" viewBox="0 0 19 20" aria-hidden="true">${g}</svg>`;};
const ROWS=[['-','ok','sheets','图纸'],['v=','ok','sheet1','图纸页 "A3_1" (工作-...'],['vv+','ok','viewi','导入的 "Top@5"'],['vvL','ok','spring','表区域 "SX@6" A'],['vL','quest','folder','过时'],['+','','group','组'],['=','ball','hist','模型历史记录'],[' L','eye','body','<b>体 (1)</b>','colI']];
define('nx-navigator',()=>`<style>
:host{display:flex;flex-direction:column;flex:none;width:238px;padding-left:8px;min-height:0;background:#fff}
.tree{flex:1;min-height:0;overflow:hidden;border:1px solid #d2d2d2;border-right:0;border-bottom:0}
table{border-collapse:collapse;table-layout:fixed;width:229px}
th{height:21px;padding:0;font-weight:400;background:#efefef;border-right:1px solid #d2d2d2;border-bottom:1px solid #d2d2d2}
td{height:20px;padding:0;border-right:1px solid #e4e4e4;border-bottom:1px solid #e4e4e4}
tr:nth-child(even) td{background:#f9f9f9}
th:last-child,td:last-child{border-right:0}
th .row{padding-left:6px;gap:18px}
.n{display:flex;align-items:center;height:19px;overflow:hidden;white-space:nowrap}
.n svg{flex:none;display:block}
.s{width:16px;display:flex;justify-content:center;flex:none}
.n span{margin-left:3px}
.x{display:flex;justify-content:center}
.bar{flex:none;height:17px;background:#efefef;border:1px solid #d2d2d2;border-width:0 0 1px 1px;padding:7px 0 0 17px}
.bar i{display:block;height:2px;background:#858585}
.split{flex:none;height:6px;margin-top:3px;background:#dcdcdc;border:1px solid #9e9e9e;border-right:0}
.acc{display:flex;width:100%;height:24px;justify-content:flex-start;gap:9px;padding:4px 0 0 9px;border-bottom:2px solid #d2d2d2;color:#00607f;font-size:14px}
.acc:first-of-type{height:26px}
.pad{flex:none;height:5px}
</style>
<div class="tree"><table><colgroup><col style="width:199px"><col style="width:24px"><col></colgroup><thead><tr><th><div class="row">名称 ${ic('up')}</div></th><th>当</th><th></th></tr></thead>
<tbody>${ROWS.map(r=>`<tr><td><div class="n">${[...r[0]].map(guide).join('')}${r[1]?`<div class="s">${ic(r[1])}</div>`:''}${ic(r[2])}<span>${r[3]}</span></div></td><td><div class="x">${r[4]?ic(r[4]):''}</div></td><td></td></tr>`).join('')}${'<tr><td></td><td></td><td></td></tr>'.repeat(25)}</tbody></table></div>
<div class="bar"><i></i></div><div class="split"></div>
${['搜索','相关性','细节','预览'].map(n=>`<button class="acc">${ic('right')}${n}</button>`).join('')}<div class="pad"></div>`);

define('nx-section',e=>`<style>
:host{flex:none;background:#fff;border:1px solid #d0d0d0;padding:0 8px 8px}
h3{display:flex;align-items:center;gap:9px;height:24px;margin:0;font-size:13px;color:#00607f}
.c{display:flex;flex-direction:column;gap:2px;padding-top:6px}
:host([shut]){padding-bottom:0;height:25px}
:host([shut]) .c{display:none}
:host([shut]) h3{height:23px;padding-left:1px}
:host([sub]){margin-top:2px}
</style><h3>${ic(e.hasAttribute('shut')?'right':'caretS')}${at(e,'label')}</h3><div class="c"><slot></slot></div>`);
define('nx-row',e=>`<style>
:host{display:flex;align-items:center;flex:none;gap:2px;height:var(--rh,32px)}
.l{flex:1;display:flex;align-items:center;gap:3px;height:100%}
:host([active]) .l{background:#fee07a;color:#000}
</style><div class="l">${at(e,'icon')?ic(at(e,'icon')):''}<span>${at(e,'label')}</span></div><slot></slot>`);
define('nx-box',e=>`<style>
:host{flex:none}
button{width:var(--w,32px);height:var(--w,32px);border:1px solid #767676;background:#fff}
:host([active]) button{background:#fee07a;border-color:#f5b81c}
</style><button aria-label="${at(e,'icon')}">${ic(at(e,'icon'))}</button>`);
define('nx-check',e=>`<style>
:host{flex:none;height:21px;display:flex;align-items:center}
label{display:flex;align-items:center;gap:4px;padding-left:1px}
input{width:13px;height:13px;border:1px solid #666;border-radius:3px;background:#f6f6f6}
input:checked{background:#0a5fb8;border-color:#0a5fb8}
.i{display:grid}.i>*{grid-area:1/1}
svg{display:none;pointer-events:none}input:checked+svg{display:block}
</style><label><span class="i"><input type="checkbox" ${e.hasAttribute('on')?'checked':''}><svg width="13" height="13" viewBox="0 0 13 13"><path d="M3.500 6.500L5.500 8.500L9.500 4.500" fill="none" stroke="#fff"/></svg></span>${at(e,'label')}</label>`);

define('nx-dialog',()=>`<style>
:host{display:flex;flex-direction:column;flex:none;width:339px;background:#efefef;border:1px solid #d2d2d2;border-width:0 1px;min-height:0}
header{display:flex;align-items:center;flex:none;height:24px;margin:0 -1px;padding:0 9px 0 7px;background:#005f87;color:#fff;font-size:14px;gap:7px}
header span{flex:1}
header button{width:14px;height:24px}
.mid{flex:none;display:flex;height:723px;padding:5px 0 0 5px}
.list{flex:1;display:flex;flex-direction:column;gap:2px;overflow:hidden}
.bar{width:22px;display:flex;flex-direction:column;align-items:center;padding:4px 4px 6px 0;gap:5px;color:#777}
.bar i{width:6px;height:580px;border-radius:3px;background:#858585}
.bar .dn{margin-top:auto}
.fold{height:12px;color:#111}
footer{flex:1;display:flex;align-items:flex-start;justify-content:flex-end;margin:1px 5px 0;border-top:1px solid #cfcfcf;padding:8px 10px 0 0}
footer button{width:54px;height:25px;background:#005f87;color:#fff}
.v{display:flex;border:1px solid #767676;height:32px;width:49px}
.v button{height:30px;width:31px}.v .d{width:17px;border-left:1px solid #767676}
.trk{height:25px;gap:9px;padding-left:10px;justify-content:flex-start;font-size:13px;font-weight:700;color:#00607f}
</style>
<header>${ic('gearW')}<span>剖视图</span><button aria-label="重置">${ic('reset')}</button><button aria-label="帮助">${ic('q')}</button><button aria-label="关闭">${ic('close')}</button></header>
<div class="mid"><div class="list">
<nx-section label="剖切线"><nx-row label="定义" style="--rh:26px"><nx-select label="定义" icon="dyn" value="动态"></nx-select></nx-row><nx-row label="方法" style="--rh:26px"><nx-select label="方法" icon="spring" value="点到点" style="--p:4px"></nx-select></nx-row></nx-section>
<nx-section label="铰链线"><nx-row label="矢量选项" style="--rh:25px;--sh:25px"><nx-select label="矢量选项" value="已定义" style="--p:4px"></nx-select></nx-row>
<nx-row label="指定矢量" icon="ok"><nx-box icon="vec" style="--w:24px"></nx-box><div class="v"><button aria-label="自动判断矢量">${ic('vecB')}</button><button class="d" aria-label="矢量类型">${ic('caretS')}</button></div></nx-row>
<nx-row label="反转剖切方向" style="--rh:24px"><nx-box icon="rev" style="--w:24px"></nx-box></nx-row><nx-check label="关联"></nx-check></nx-section>
<nx-section label="截面线段"><nx-check label="创建折叠剖视图"></nx-check><nx-row label="指定位置 (6)" icon="ok"><nx-box icon="pts" style="--w:24px"></nx-box><nx-box icon="aim"></nx-box></nx-row><nx-section sub shut label="列表"></nx-section></nx-section>
<nx-section label="父视图"><nx-row label="选择视图" icon="ok"><nx-box icon="selv"></nx-box></nx-row></nx-section>
<nx-section label="视图原点"><nx-row active label="指定位置" icon="fin"><nx-box active icon="move"></nx-box></nx-row>
<nx-section sub label="放置"><nx-row label="方法" style="--rh:26px"><nx-select label="放置方法" icon="hinge" value="铰链副" style="--p:4px"></nx-select></nx-row><button class="trk">${ic('right')}跟踪</button><nx-check on label="关联对齐"></nx-check></nx-section>
<nx-section sub label="移动视图"><nx-row label="指定屏幕位置"><nx-box icon="move"></nx-box></nx-row></nx-section></nx-section>
<nx-section label=""></nx-section>
</div><div class="bar">${ic('upS')}<i></i><nx-icon class="dn" name="down"></nx-icon></div></div>
<button class="fold" aria-label="折叠">${ic('up')}</button><footer><button>关闭</button></footer>`);

const tx=(x,y,v,z=7)=>`<text x="${x}" y="${y}" font-size="${z}">${v}</text>`;
const hub=(x,y)=>`<circle cx="${x}" cy="${y}" r="32.300" stroke-width="1.500"/><circle cx="${x}" cy="${y}" r="20.500" stroke-width="1.800"/><circle cx="${x}" cy="${y}" r="18.500" stroke-width="1"/><circle cx="${x}" cy="${y}" r="14.500" stroke-width="1.300"/>`;
define('nx-canvas',()=>`<style>
:host{flex:1;position:relative;min-width:0;background:#fff;overflow:hidden}
svg.d{display:block;width:100%;height:100%}
text{fill:#000;stroke:none;text-anchor:middle;font-family:"Noto Sans","Noto Sans CJK SC",sans-serif}
.view{position:absolute;top:5px;left:489px;display:flex;align-items:center;width:74px;height:34px;border-bottom:1px solid #d6d6d6;color:#111;padding-left:12px}
.view hr{width:1px;height:26px;margin:0 0 0 7px;border:0;background:#d6d6d6}
.view .e{align-self:flex-end;--h:20px}
</style>
<svg class="d" viewBox="614 205 1306 804" preserveAspectRatio="xMinYMin meet" fill="none" stroke="#000" role="img" aria-label="图纸 A3_1">
<path d="M625.500 336.500H1513.500V964.500H625.500Z" stroke="#888"/>
<path d="M626 738.500H678M626 753.500H678M626 774.500H678M626 789.500H678M626 810.500H678M626 825.500H678M626 846.500H678M626 861.500H678M626 882.500H678M626 896.500H678M626 917.500H678M626 953.500H678" stroke="#888"/><path d="M626 932.500H678"/>
${[['借通用件登记',749],['描　图',785],['校　描',821],['旧底图总号',856],['签　字',892],['日　期',928]].map(a=>tx(652,a[1],a[0],9)).join('')}
<path d="M679 347.500H1502.500V953.500H679Z" stroke-width="1.600"/>
<path d="M679 367.500H797.500V348M709.500 421.500H1414.500V532.500H709.500Z" stroke="#444"/>
<path d="M1418 432.500H1429M1418 432.500L1424 443L1437.500 420.500" stroke="#333"/>${tx(1408.5,441,'其 余',8)}
<g stroke="#999"><path d="M915 701.500H1001M958.500 657V744M1168 701.500H1255M795 801.500H829M812.500 785V818M1340 600.500H1374M1357.500 583V617"/></g><path d="M1211.500 657V744"/>
<path d="M958 669.500H1211M958 732.500H1211M934 680L803.300 790.900A13.700 13.700 0 0 0 819 813.700L968 732.500M1235.600 721.600L1366.300 610.700A13.700 13.700 0 0 0 1350.600 587.900L1201.600 669.100" stroke-width="1.700"/>
${hub(958,701)}${hub(1211.5,701)}
<circle cx="812.500" cy="801.500" r="6.300" stroke-width="1.500"/><circle cx="1357.500" cy="600.500" r="6.300" stroke-width="1.500"/>
<path d="M947 708L958 701.500H972M1198 701.500H1211.500L1222 694.500" stroke-width="1.800"/>
<path d="M759.500 787L783.500 821.500M1362.500 545.500L1386.500 579.500" stroke="#333"/><path d="M783.500 822L794 815M1386.500 580L1376 587" stroke-width="2"/>
<g>${tx(795.5,844,'A',14)}${tx(1398,603,'A',14)}</g>
<path d="M1063 485L1084.700 701" stroke="#f7a04a" stroke-width="2.800" stroke-dasharray="8 8"/>
<circle cx="1062" cy="477" r="4.800" stroke-width="2.200"/><path d="M1060 475L1064 479M1064 475L1060 479"/>
<g stroke-width="1"><path d="M1123 869.500H1249M1123 879.500H1249M1123 890.500H1249M1123 911.500H1249M1123 922.500H1249M1123 932.500H1249M1123 943.500H1249" stroke="#444"/>
<path d="M1249 913.500H1376M1376 896.500H1502M1376 913.500H1502M1392.500 896V913M1409.500 896V913M1424.500 896V913"/></g>
<path d="M1122.500 954V858.500H1502M1139.500 858V912M1154 858V954M1196.500 858V954M1228 858V912M1249.500 858V954M1376 858V954M1123 901.500H1249M1376 886H1502M1376 924H1502M1439.500 886V924M1471.500 886V913" stroke-width="1.600"/>
${[[1131,909,'标记'],[1147,909,'处数'],[1175,909,'更改文件号'],[1212,909,'签 字'],[1239,909,'日期'],[1138,920,'设 计'],[1138,930,'校 对'],[1138,940,'审 核'],[1138,951,'批 准'],[1408,894,'图样标记'],[1455,894,'重 量'],[1487,894,'比 例'],[1408,921,'共　页'],[1471,921,'第　页'],[1439.5,942,'西门子产品管理软件（上海）有限公司']].map(a=>tx(...a)).join('')}
</svg>
<div class="view"><nx-tool icon="orient" label="定向视图"></nx-tool>${t('caretS',16)}<hr><nx-tool class="e" icon="caretS" style="--w:14px"></nx-tool></div>`);

define('nx-doctabs',()=>`<style>
:host{display:flex;flex:none;height:27px;background:#fff}
.nav{display:flex;align-items:center;width:323px;padding:0 12px 0 6px;gap:4px}
.nav span{flex:1}
.docs{flex:1;border-bottom:2px solid #005f87;display:flex}
.doc{height:25px;width:133px;background:#005f87;color:#fff;font-size:12px;gap:7px}
</style><div class="nav">${ic('part16')}<span>部件导航器</span>${ic('box')}</div><div class="docs"><button class="doc">${ic('prt')}<span>link_part.prt</span>${ic('tabE')}${ic('tabX')}</button></div>`);

define('nx-app',()=>`<style>
:host{display:flex;flex-direction:column;height:100vh;position:relative}
.top{flex:none;background:linear-gradient(90deg,#00668c,#007ba5)}
nx-ribbon,nx-selbar{flex:none}
main{flex:1;display:flex;min-height:0}
.work{flex:1;display:flex;flex-direction:column;min-width:0}
.panes{flex:1;display:flex;min-height:0}
footer{flex:none;height:22px;border-top:1px solid #9e9e9e;padding:3px 3px 0;font-size:11px;font-weight:500;color:#000}
.mark{position:absolute;right:2px;bottom:8px;font-size:38px;line-height:48px;color:#b4b4b4;opacity:.85;text-shadow:1px 1px 1px #fff;pointer-events:none}
</style>
<div class="top"><nx-titlebar></nx-titlebar><nx-menubar></nx-menubar></div><nx-ribbon></nx-ribbon><nx-selbar></nx-selbar>
<main><nx-rail></nx-rail><div class="work"><nx-doctabs></nx-doctabs><div class="panes"><nx-navigator></nx-navigator><nx-dialog></nx-dialog><nx-canvas></nx-canvas></div></div></main>
<footer>指定放置视图的位置</footer><div class="mark">CSDN @山涧果子</div>`);
</script>
</body>
</html>
